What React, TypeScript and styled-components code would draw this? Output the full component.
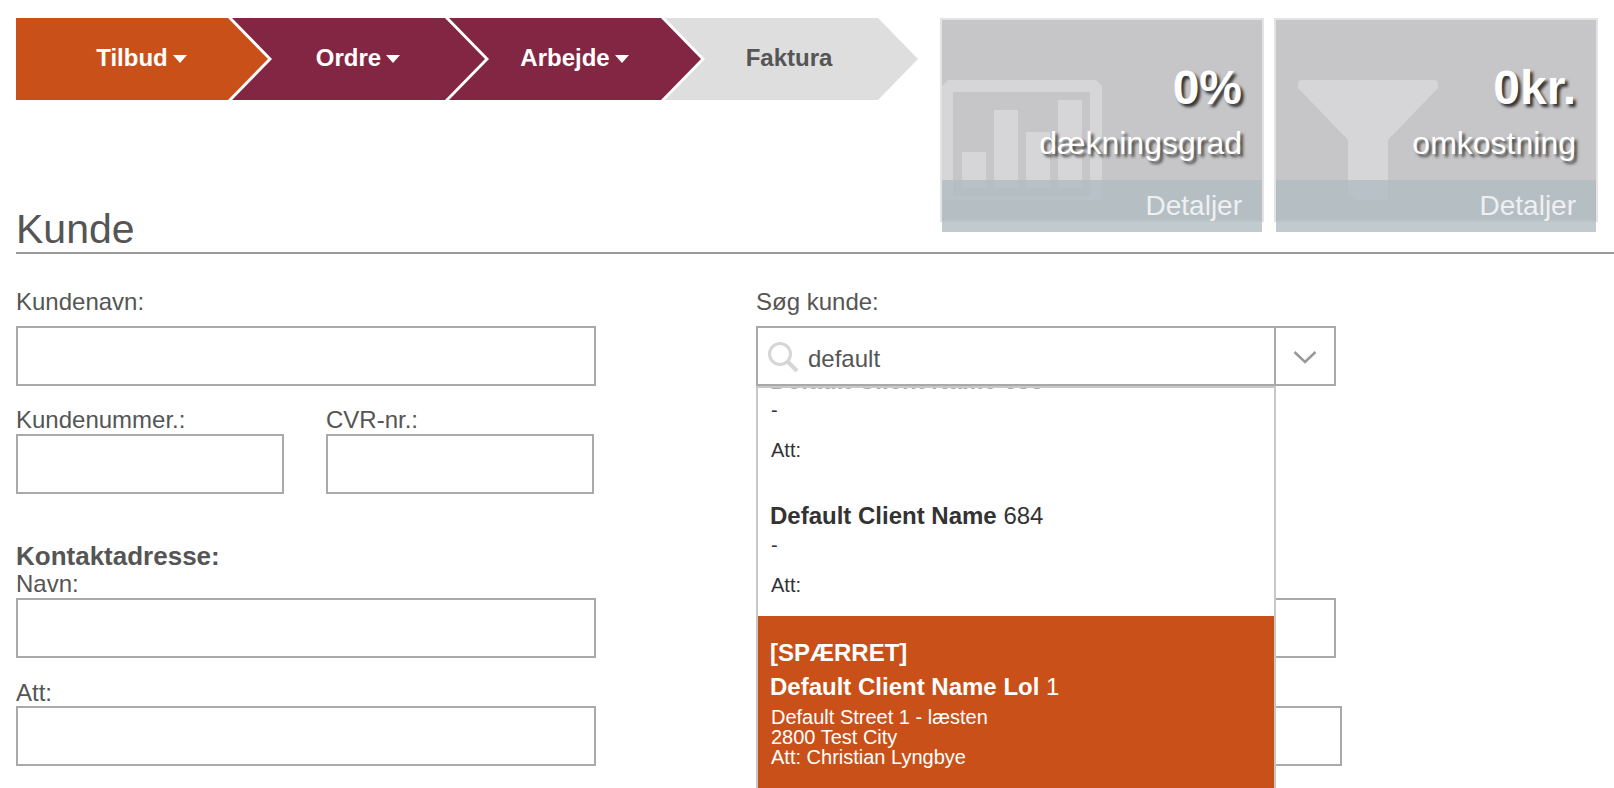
import React from 'react';
import styled, { createGlobalStyle } from 'styled-components';

const Global = createGlobalStyle`
  html, body { margin: 0; padding: 0; background: #fff; height: 788px; overflow: hidden; }
  body { font-family: "Liberation Sans", Arial, sans-serif; color: #555; }
  * { box-sizing: border-box; }
`;

const Page = styled.div`
  height: 788px;
  overflow: hidden;
  padding: 18px 0 0 16px;
`;

const TopRow = styled.div`
  display: flex;
  align-items: flex-start;
  height: 187px;
`;

const Steps = styled.div`
  display: flex;
  width: 902px;
  flex: none;
`;

const Step = styled.div<{ $first?: boolean; $color: string; $fg: string; $pr?: number; $w: number }>`
  width: ${p => p.$w}px;
  height: 82px;
  flex: none;
  margin-left: ${p => (p.$first ? 0 : -36)}px;
  padding: 0 ${p => p.$pr ?? 1}px 2px 0;
  background: ${p => p.$color};
  color: ${p => p.$fg};
  display: flex;
  align-items: center;
  justify-content: center;
  gap: 5px;
  font-size: 24px;
  font-weight: 700;
  clip-path: ${p =>
    p.$first
      ? 'polygon(0 0, calc(100% - 40px) 0, 100% 50%, calc(100% - 40px) 100%, 0 100%)'
      : 'polygon(0 0, calc(100% - 40px) 0, 100% 50%, calc(100% - 40px) 100%, 0 100%, 40px 50%)'};
`;

const Caret = styled.span`
  width: 0;
  height: 0;
  border-left: 7px solid transparent;
  border-right: 7px solid transparent;
  border-top: 8px solid #fff;
  margin-top: 1px;
`;

const Cards = styled.div`
  display: flex;
  gap: 10px;
  margin-left: 22px;
  position: relative;
  z-index: 1;
`;

const Card = styled.div`
  position: relative;
  width: 324px;
  height: 204px;
  flex: none;
  background: #c6c6c8;
  border: 2px solid #e3e3e3;
  padding: 40px 20px 0 0;
  display: flex;
  flex-direction: column;
  align-items: flex-end;
  color: #fff;
`;

const Big = styled.div`
  position: relative;
  font-size: 48px;
  line-height: 56px;
  font-weight: 700;
  text-shadow: 3px 3px 3px #333;
`;

const Sub = styled.div`
  position: relative;
  font-size: 32px;
  line-height: 36px;
  margin-top: 9px;
  text-shadow: 3px 3px 3px #444;
`;

const CardIcon = styled.svg`
  position: absolute;
  left: 0;
  top: 60px;
`;

const CardFooter = styled.div`
  position: absolute;
  left: 0;
  right: 0;
  top: 160px;
  height: 52px;
  background: rgba(176, 187, 193, 0.78);
  color: #eef0f2;
  font-size: 28px;
  line-height: 52px;
  text-align: right;
  padding-right: 20px;
`;

const Heading = styled.h1`
  margin: 0;
  font-size: 41px;
  font-weight: 400;
  line-height: 48px;
  height: 49px;
  color: #555;
  border-bottom: 2px solid #999;
`;

const Form = styled.div`
  display: flex;
  padding-top: 34px;
`;

const LeftCol = styled.div`
  width: 740px;
  flex: none;
`;

const RightCol = styled.div`
  width: 586px;
  flex: none;
`;

const Row = styled.div`
  display: flex;
  gap: 42px;
`;

const Field = styled.div<{ $mt?: number }>`
  margin-top: ${p => p.$mt ?? 0}px;
`;

const Label = styled.div<{ $gap?: number }>`
  font-size: 24px;
  line-height: 28px;
  margin-bottom: ${p => p.$gap ?? 0}px;
  color: #555;
`;

const SectionLabel = styled.div`
  font-size: 26px;
  line-height: 28px;
  font-weight: 700;
  color: #555;
`;

const TextInput = styled.input<{ $w: number; $mt?: number }>`
  display: block;
  width: ${p => p.$w}px;
  height: 60px;
  margin-top: ${p => p.$mt ?? 0}px;
  border: 2px solid #a9a9a9;
  background: #fff;
  border-radius: 0;
  outline: none;
  padding: 0 12px;
  font: 24px "Liberation Sans", Arial, sans-serif;
`;

const SearchWrap = styled.div`
  position: relative;
  width: 580px;
  height: 60px;
  display: flex;
  border: 2px solid #a9a9a9;
  background: #fff;
`;

const SearchMain = styled.div`
  width: 518px;
  flex: none;
  display: flex;
  align-items: center;
  padding-left: 9px;
  gap: 9px;
  border-right: 2px solid #a9a9a9;
`;

const SearchIcon = styled.svg`
  flex: none;
  margin-top: 2px;
`;

const SearchInput = styled.input`
  flex: 1;
  min-width: 0;
  border: 0;
  outline: none;
  padding: 0;
  margin-top: 5px;
  font: 24px "Liberation Sans", Arial, sans-serif;
  color: #555;
  background: transparent;
`;

const ChevronCell = styled.div`
  flex: 1;
  display: flex;
  align-items: center;
  justify-content: center;
  padding-top: 1px;
`;

const Dropdown = styled.div`
  position: absolute;
  left: -2px;
  top: 58px;
  width: 520px;
  height: 420px;
  overflow: hidden;
  background: #fff;
  border: 2px solid #c8c8c8;
  border-bottom: 0;
  z-index: 2;
`;

const Item = styled.div`
  padding: 21px 12px 17px;
  color: #333;
`;

const ScrolledItem = styled(Item)`
  margin-top: -42px;
`;

const ClippedName = styled.div`
  font-size: 24px;
  line-height: 28px;
  color: #aaa;
  b { font-weight: 700; }
`;

const BlockedItem = styled.div`
  background: #c95119;
  color: #fff;
  padding: 23px 12px 30px;
`;

const Name = styled.div<{ $mb?: number }>`
  font-size: 24px;
  line-height: 28px;
  margin-bottom: ${p => p.$mb ?? 0}px;
  b { font-weight: 700; }
`;

const Dash = styled.div`
  font-size: 20px;
  line-height: 31px;
  margin-bottom: 10px;
  padding-left: 1px;
`;

const Small = styled.div`
  font-size: 20px;
  line-height: 28px;
  padding-left: 1px;
`;

const Address = styled.div`
  font-size: 20px;
  line-height: 20px;
  padding-left: 1px;
`;

export default function App() {
  return (
    <>
      <Global />
      <Page>
        <TopRow>
          <Steps>
            <Step $first $w={252} $color="#c95119" $fg="#fff">Tilbud<Caret /></Step>
            <Step $w={253} $color="#832643" $fg="#fff">Ordre<Caret /></Step>
            <Step $w={252} $color="#832643" $fg="#fff">Arbejde<Caret /></Step>
            <Step $w={253} $pr={5} $color="#dedede" $fg="#555">Faktura</Step>
          </Steps>
          <Cards>
            <Card>
              <CardIcon width="160" height="120" viewBox="0 0 160 120">
                <path fill="#d6d6d8" fillRule="evenodd" d="M6 0H154L160 6V120H0V6ZM11 12V116H148V12Z" />
                <path fill="#d6d6d8" d="M20 72h24v36H20zM52 30h24v78H52zM84 52h24v56H84zM116 20h24v88h-24z" />
              </CardIcon>
              <Big>0%</Big>
              <Sub>dækningsgrad</Sub>
              <CardFooter>Detaljer</CardFooter>
            </Card>
            <Card>
              <CardIcon width="170" height="120" viewBox="0 0 170 120">
                <path fill="#d6d6d8" d="M26 0H158Q162 0 162 4V8L112 60V120H80L72 112V60L22 8V4Q22 0 26 0Z" />
              </CardIcon>
              <Big>0kr.</Big>
              <Sub>omkostning</Sub>
              <CardFooter>Detaljer</CardFooter>
            </Card>
          </Cards>
        </TopRow>
        <Heading>Kunde</Heading>
        <Form>
          <LeftCol>
            <Label $gap={10}>Kundenavn:</Label>
            <TextInput $w={580} />
            <Row>
              <Field $mt={20}>
                <Label>Kundenummer.:</Label>
                <TextInput $w={268} />
              </Field>
              <Field $mt={20}>
                <Label>CVR-nr.:</Label>
                <TextInput $w={268} />
              </Field>
            </Row>
            <Field $mt={48}>
              <SectionLabel>Kontaktadresse:</SectionLabel>
              <Label>Navn:</Label>
              <TextInput $w={580} />
            </Field>
            <Field $mt={21}>
              <Label $gap={-1}>Att:</Label>
              <TextInput $w={580} />
            </Field>
          </LeftCol>
          <RightCol>
            <Label $gap={10}>Søg kunde:</Label>
            <SearchWrap>
              <SearchMain>
                <SearchIcon width="32" height="32" viewBox="0 0 32 32" fill="none">
                  <circle cx="13" cy="13" r="10.5" stroke="#d6d6d6" strokeWidth="3" />
                  <path d="M21 21l9 9" stroke="#d6d6d6" strokeWidth="4" />
                </SearchIcon>
                <SearchInput readOnly value="default" />
              </SearchMain>
              <ChevronCell>
                <svg width="24" height="14" viewBox="0 0 24 14" fill="none">
                  <path d="M1.5 2L12 12L22.5 2" stroke="#999" strokeWidth="2.5" />
                </svg>
              </ChevronCell>
              <Dropdown>
                <ScrolledItem>
                  <ClippedName><b>Default Client Name</b> 683</ClippedName>
                  <Dash>-</Dash>
                  <Small>Att:</Small>
                </ScrolledItem>
                <Item>
                  <Name><b>Default Client Name</b> 684</Name>
                  <Dash>-</Dash>
                  <Small>Att:</Small>
                </Item>
                <BlockedItem>
                  <Name $mb={6}><b>[SPÆRRET]</b></Name>
                  <Name $mb={6}><b>Default Client Name Lol</b> 1</Name>
                  <Address>Default Street 1 - læsten</Address>
                  <Address>2800 Test City</Address>
                  <Address>Att: Christian Lyngbye</Address>
                </BlockedItem>
              </Dropdown>
            </SearchWrap>
            <TextInput $w={580} $mt={212} />
            <TextInput $w={586} $mt={48} />
          </RightCol>
        </Form>
      </Page>
    </>
  );
}
